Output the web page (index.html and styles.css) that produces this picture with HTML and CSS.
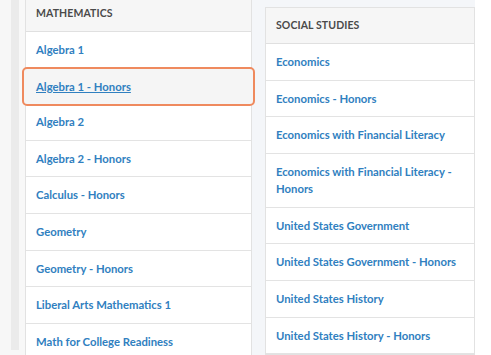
FILE: index.html
```html
<!DOCTYPE html>
<html>
<head>
<meta charset="utf-8">
<link rel="stylesheet" href="styles.css">
</head>
<body>
<div class="page">
  <div class="col-left">
    <div class="rail">
      <div class="panel panel-math">
        <div class="panel-head">MATHEMATICS</div>
        <a class="row" href="#">Algebra 1</a>
        <a class="row active" href="#">Algebra 1 - Honors</a>
        <a class="row" href="#">Algebra 2</a>
        <a class="row" href="#">Algebra 2 - Honors</a>
        <a class="row" href="#">Calculus - Honors</a>
        <a class="row" href="#">Geometry</a>
        <a class="row" href="#">Geometry - Honors</a>
        <a class="row" href="#">Liberal Arts Mathematics 1</a>
        <a class="row" href="#">Math for College Readiness</a>
      </div>
    </div>
  </div>
  <div class="col-right">
    <div class="panel panel-social">
      <div class="panel-head">SOCIAL STUDIES</div>
      <a class="row" href="#">Economics</a>
      <a class="row" href="#">Economics - Honors</a>
      <a class="row" href="#">Economics with Financial Literacy</a>
      <a class="row" href="#">Economics with Financial Literacy - Honors</a>
      <a class="row" href="#">United States Government</a>
      <a class="row" href="#">United States Government - Honors</a>
      <a class="row" href="#">United States History</a>
      <a class="row" href="#">United States History - Honors</a>
    </div>
  </div>
</div>
</body>
</html>
```

FILE: styles.css
```css
html, body {
  margin: 0;
  padding: 0;
  background: #ffffff;
}
body {
  font-family: "Lato", "Open Sans", sans-serif;
  width: 491px;
  height: 355px;
  overflow: hidden;
}
.page {
  display: flex;
  align-items: flex-start;
  height: 355px;
  overflow: hidden;
}
.col-left {
  padding-left: 11px;
  background: #f7f7f7;
  height: 355px;
  box-sizing: border-box;
}
.rail {
  border-left: 8px solid #ebebeb;
  padding-left: 6px;
  background: #f8f8f8;
  height: 355px;
  box-sizing: border-box;
}
.col-right {
  background: #f4f6f9;
  padding: 7px 0 0 13px;
  height: 355px;
  box-sizing: border-box;
}
.panel {
  background: #ffffff;
  border: 1px solid #e2e2e2;
  display: flex;
  flex-direction: column;
}
.panel-math {
  width: 227px;
  box-sizing: border-box;
  margin-top: -5px;
}
.panel-social {
  width: 210px;
  box-sizing: border-box;
}
.panel-head {
  background: #f6f6f6;
  color: #4a4a4a;
  font-size: 10.5px;
  font-weight: 700;
  letter-spacing: 0.1px;
  line-height: 17px;
  padding: 9px 10px 9px 10px;
  border-bottom: 1px solid #e0e0e0;
}
.row {
  display: block;
  color: #3080c0;
  font-size: 11.3px;
  font-weight: 700;
  line-height: 17.4px;
  padding: 9.1px 10px;
  border-bottom: 1px solid #e3e3e3;
  text-decoration: none;
}
.panel-social .row {
  padding-left: 10px;
  padding-right: 8px;
}
.row.active {
  margin: -2px -4px;
  padding: 9.1px 12px;
  border: 2px solid #ef8a5e;
  border-radius: 5px;
  background: #f5f5f5;
  text-decoration: underline;
  position: relative;
}
```
